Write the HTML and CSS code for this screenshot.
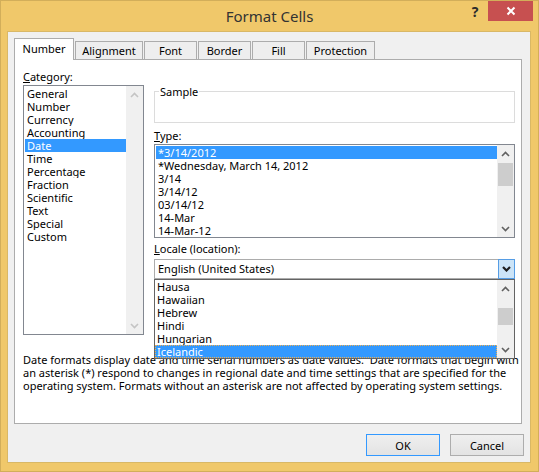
FILE: index.html
```html
<!DOCTYPE html>
<html>
<head>
<meta charset="utf-8">
<title>Format Cells</title>
<link rel="stylesheet" href="styles.css">
</head>
<body>
<div class="window">
  <div class="titlebar">
    <div class="title">Format Cells</div>
    <div class="controls">
      <span class="help">?</span>
      <span class="close"><svg width="10" height="10" viewBox="0 0 10 10"><path d="M1.5 1.5 L8.5 8.5 M8.5 1.5 L1.5 8.5" stroke="#fff" stroke-width="2" fill="none"/></svg></span>
    </div>
  </div>
  <div class="client">
    <div class="tabs">
      <div class="tab active w-number">Number</div>
      <div class="tab w-align">Alignment</div>
      <div class="tab w-font">Font</div>
      <div class="tab w-border">Border</div>
      <div class="tab w-fill">Fill</div>
      <div class="tab w-prot">Protection</div>
    </div>
    <div class="panel">
      <div class="columns">
        <div class="col-left">
          <div class="label"><u>C</u>ategory:</div>
          <div class="listbox cat">
            <ul class="items">
              <li>General</li>
              <li>Number</li>
              <li>Currency</li>
              <li>Accounting</li>
              <li class="sel">Date</li>
              <li>Time</li>
              <li>Percentage</li>
              <li>Fraction</li>
              <li>Scientific</li>
              <li>Text</li>
              <li>Special</li>
              <li>Custom</li>
            </ul>
            <div class="vscroll disabled">
              <div class="sb-btn"><svg width="9" height="6" viewBox="0 0 9 6"><path d="M1 5 L4.5 1.5 L8 5" class="chev"/></svg></div>
              <div class="sb-track"></div>
              <div class="sb-btn"><svg width="9" height="6" viewBox="0 0 9 6"><path d="M1 1 L4.5 4.5 L8 1" class="chev"/></svg></div>
            </div>
          </div>
        </div>
        <div class="col-right">
          <fieldset class="sample">
            <legend>Sample</legend>
            <div class="sample-body"></div>
          </fieldset>
          <div class="label gap-type"><u>T</u>ype:</div>
          <div class="listbox type">
            <ul class="items">
              <li class="sel">*3/14/2012</li>
              <li>*Wednesday, March 14, 2012</li>
              <li>3/14</li>
              <li>3/14/12</li>
              <li>03/14/12</li>
              <li>14-Mar</li>
              <li>14-Mar-12</li>
            </ul>
            <div class="vscroll">
              <div class="sb-btn"><svg width="9" height="6" viewBox="0 0 9 6"><path d="M1 5 L4.5 1.5 L8 5" class="chev"/></svg></div>
              <div class="sb-track"><div class="thumb thumb-type"></div></div>
              <div class="sb-btn"><svg width="9" height="6" viewBox="0 0 9 6"><path d="M1 1 L4.5 4.5 L8 1" class="chev"/></svg></div>
            </div>
          </div>
          <div class="label gap-locale"><u>L</u>ocale (location):</div>
          <div class="combo-wrap">
            <div class="combo">
              <span class="combo-text">English (United States)</span>
              <span class="combo-btn"><svg width="9" height="6" viewBox="0 0 9 6"><path d="M1 1 L4.5 4.5 L8 1" class="chev-bold"/></svg></span>
            </div>
            <div class="dropdown">
              <ul class="items">
                <li>Hausa</li>
                <li>Hawaiian</li>
                <li>Hebrew</li>
                <li>Hindi</li>
                <li>Hungarian</li>
                <li class="sel focus">Icelandic</li>
              </ul>
              <div class="vscroll">
                <div class="sb-btn"><svg width="9" height="6" viewBox="0 0 9 6"><path d="M1 5 L4.5 1.5 L8 5" class="chev"/></svg></div>
                <div class="sb-track"><div class="thumb thumb-locale"></div></div>
                <div class="sb-btn"><svg width="9" height="6" viewBox="0 0 9 6"><path d="M1 1 L4.5 4.5 L8 1" class="chev"/></svg></div>
              </div>
            </div>
          </div>
        </div>
      </div>
      <p class="desc">Date formats display date and time serial numbers as date values.&nbsp; Date formats that begin with<br>an asterisk (*) respond to changes in regional date and time settings that are specified for the<br>operating system. Formats without an asterisk are not affected by operating system settings.</p>
    </div>
    <div class="buttons">
      <button class="btn default">OK</button>
      <button class="btn">Cancel</button>
    </div>
  </div>
</div>
</body>
</html>
```

FILE: styles.css
```css
* { box-sizing: border-box; }

body {
  margin: 0;
  font-family: "Noto Sans", "DejaVu Sans", sans-serif;
  font-size: 11px;
  color: #000;
}

.window {
  width: 539px;
  height: 472px;
  background: #f0c86a;
  border: 1px solid #d2ae5a;
  display: flex;
  flex-direction: column;
}

.titlebar {
  height: 30px;
  display: grid;
  grid-template-columns: 1fr auto 1fr;
}

.title {
  grid-column: 2;
  font-size: 15px;
  line-height: 30px;
  color: #333;
}

.controls {
  grid-column: 3;
  justify-self: end;
  display: flex;
  height: 20px;
  margin-right: 5px;
}

.help {
  width: 26px;
  height: 20px;
  display: flex;
  align-items: center;
  justify-content: center;
  font-weight: bold;
  font-size: 14px;
  color: #2b2b2b;
}

.close {
  width: 45px;
  height: 20px;
  background: #c75050;
  display: flex;
  align-items: center;
  justify-content: center;
}

.client {
  margin: 0 7px 0 6px;
  width: 524px;
  height: 432px;
  background: #f0f0f0;
  border: 1px solid #d9b866;
  padding: 6px 6px 0;
  display: flex;
  flex-direction: column;
}

.tabs {
  display: flex;
  gap: 1px;
  height: 21px;
  align-items: flex-end;
}

.tab {
  height: 18px;
  border: 1px solid #acacac;
  border-bottom: none;
  background: #eeeeee;
  text-align: center;
  line-height: 17px;
  white-space: nowrap;
}

.tab.active {
  height: 22px;
  background: #fff;
  margin-bottom: -1px;
  position: relative;
  z-index: 1;
  line-height: 20px;
}

.w-number { width: 60px; }
.w-align { width: 68px; }
.w-font { width: 53px; }
.w-border { width: 53px; }
.w-fill { width: 53px; }
.w-prot { width: 69px; }

.panel {
  height: 365px;
  margin-right: 2px;
  background: #fff;
  border: 1px solid #acacac;
  padding: 10px 6px 0 8px;
}

.columns {
  display: flex;
  gap: 10px;
}

.col-left { width: 121px; }
.col-right { width: 361px; }

.label {
  height: 13px;
  line-height: 13px;
  white-space: nowrap;
}

.gap-type { margin-top: 6px; }
.gap-locale { margin-top: 4px; }

.listbox {
  border: 1px solid #828790;
  background: #fff;
  display: flex;
  margin-top: 2px;
}

.cat { height: 250px; }
.type { height: 94px; }

.items {
  list-style: none;
  margin: 1px 0 1px 1px;
  padding: 0;
  flex: 1;
  min-width: 0;
}

.items li {
  height: 13px;
  line-height: 13px;
  padding-left: 2px;
  white-space: nowrap;
  overflow: hidden;
}

.items li.sel {
  background: #3399ff;
  color: #fff;
}

.items li.focus {
  outline: 1px dotted #f0b050;
  outline-offset: -1px;
}

.vscroll {
  width: 17px;
  background: #f0f0f0;
  display: flex;
  flex-direction: column;
}

.sb-btn {
  height: 17px;
  display: flex;
  align-items: center;
  justify-content: center;
}

.sb-track { flex: 1; }

.thumb {
  background: #cdcdcd;
  margin: 0 1px;
}

.thumb-type { margin-top: 1px; height: 23px; }
.thumb-locale { margin-top: 11px; height: 17px; }

.chev {
  fill: none;
  stroke: #606060;
  stroke-width: 1.6;
}

.disabled .chev { stroke: #c4c4c4; }

.chev-bold {
  fill: none;
  stroke: #1e1e1e;
  stroke-width: 2.2;
}

.sample {
  margin: 15px 0 0;
  padding: 0;
  border: 1px solid #dcdcdc;
  min-width: 0;
}

.sample legend {
  margin-left: 4px;
  padding: 0 1px;
  line-height: 13px;
}

.sample-body { height: 24px; }

.combo-wrap {
  position: relative;
  margin-top: 4px;
}

.combo {
  height: 20px;
  border: 1px solid #acacac;
  background: #fff;
  display: flex;
}

.combo-text {
  flex: 1;
  padding-left: 3px;
  line-height: 18px;
  white-space: nowrap;
}

.combo-btn {
  width: 17px;
  margin: -1px -1px -1px 0;
  background: #cce4f7;
  border: 1px solid #569de5;
  display: flex;
  align-items: center;
  justify-content: center;
}

.dropdown {
  position: absolute;
  top: 100%;
  left: 0;
  right: 0;
  height: 80px;
  border: 1px solid #646464;
  background: #fff;
  display: flex;
}

.dropdown .items { margin: 0; }

.desc {
  margin: 18px 0 0;
  line-height: 13px;
  white-space: nowrap;
}

.buttons {
  display: flex;
  justify-content: flex-end;
  gap: 10px;
  margin-top: 10px;
}

.btn {
  width: 74px;
  height: 22px;
  padding: 0;
  border: 1px solid #adadad;
  background: linear-gradient(#efefef, #e3e3e3);
  font: inherit;
  color: #000;
}

.btn.default { border-color: #3399ff; }
```
